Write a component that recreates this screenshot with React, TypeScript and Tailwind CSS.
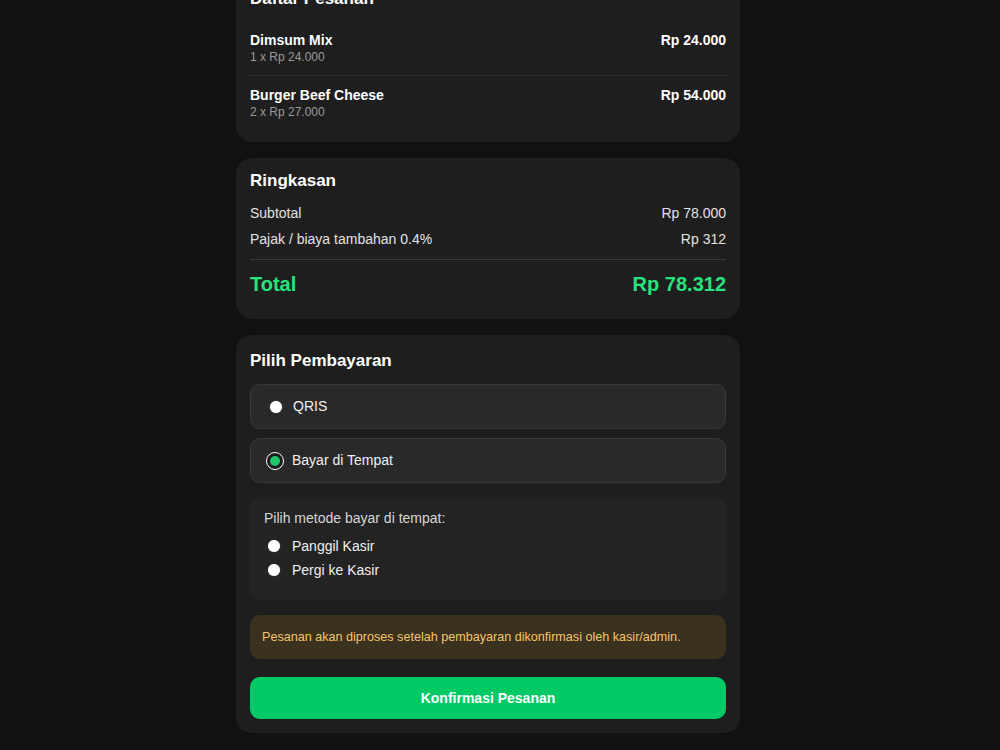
import React from "react";

const Radio = ({ checked = false }: { checked?: boolean }) =>
  checked ? (
    <span className="flex h-[18px] w-[18px] shrink-0 items-center justify-center rounded-full border-[1.5px] border-white bg-[#1c1c1c]">
      <span className="h-[10px] w-[10px] rounded-full bg-[#1fc56a]" />
    </span>
  ) : (
    <span className="h-[12px] w-[12px] shrink-0 rounded-full bg-white shadow-[0_0_1px_rgba(255,255,255,0.6)]" />
  );

export default function App() {
  return (
    <div
      className="min-h-[750px] w-full overflow-hidden bg-[#111111] pr-[24px] text-white"
      style={{ fontFamily: '"Liberation Sans", Arial, sans-serif' }}
    >
      <div className="mx-auto -mt-[24px] flex w-[504px] flex-col gap-[16px] pb-[20px]">
        {/* Daftar Pesanan */}
        <div className="rounded-[16px] bg-[#1e1e1e] px-[14px] pt-[12px] pb-[22px]">
          <h2 className="text-[17px] font-bold leading-[22px]">Daftar Pesanan</h2>
          <div className="mt-[21px]">
            <div className="flex justify-between border-b border-[#2e2e2e] pb-[10px]">
              <div>
                <div className="text-[14px] font-bold leading-[18px]">Dimsum Mix</div>
                <div className="text-[12px] leading-[16px] text-[#9a9a9a]">1 x Rp 24.000</div>
              </div>
              <div className="text-[14px] font-bold leading-[18px]">Rp 24.000</div>
            </div>
            <div className="flex justify-between pt-[10px]">
              <div>
                <div className="text-[14px] font-bold leading-[18px]">Burger Beef Cheese</div>
                <div className="text-[12px] leading-[16px] text-[#9a9a9a]">2 x Rp 27.000</div>
              </div>
              <div className="text-[14px] font-bold leading-[18px]">Rp 54.000</div>
            </div>
          </div>
        </div>

        {/* Ringkasan */}
        <div className="rounded-[16px] bg-[#1e1e1e] px-[14px] pt-[12px] pb-[21px]">
          <h2 className="text-[17px] font-bold leading-[22px]">Ringkasan</h2>
          <div className="mt-[11px] flex justify-between text-[14px] leading-[20px] text-[#e2e2e2]">
            <span>Subtotal</span>
            <span>Rp 78.000</span>
          </div>
          <div className="mt-[6px] flex justify-between text-[14px] leading-[20px] text-[#e2e2e2]">
            <span>Pajak / biaya tambahan 0.4%</span>
            <span>Rp 312</span>
          </div>
          <div className="mt-[10px] border-t border-[#3a3a3a]" />
          <div className="mt-[10px] flex justify-between text-[20px] font-bold leading-[28px] text-[#26e37d]">
            <span>Total</span>
            <span>Rp 78.312</span>
          </div>
        </div>

        {/* Pilih Pembayaran */}
        <div className="rounded-[16px] bg-[#1e1e1e] px-[14px] pt-[15px] pb-[14px]">
          <h2 className="text-[17px] font-bold leading-[22px]">Pilih Pembayaran</h2>
          <div className="mt-[12px] flex h-[45px] items-center gap-[11px] rounded-[10px] border border-[#383838] bg-[#292929] pl-[19px] text-[14px] text-[#f0f0f0]">
            <Radio />
            <span>QRIS</span>
          </div>
          <div className="mt-[9px] flex h-[45px] items-center gap-[8px] rounded-[10px] border border-[#383838] bg-[#292929] pl-[15px] text-[14px] text-[#f0f0f0]">
            <Radio checked />
            <span>Bayar di Tempat</span>
          </div>
          <div className="mt-[14px] rounded-[10px] bg-[#232323] px-[14px] pt-[12px] pb-[20px]">
            <div className="text-[14px] leading-[18px] text-[#d6d6d6]">Pilih metode bayar di tempat:</div>
            <div className="mt-[9px] flex items-center gap-[12px] pl-[4px] text-[14px] leading-[20px] text-[#f0f0f0]">
              <Radio />
              <span>Panggil Kasir</span>
            </div>
            <div className="mt-[4px] flex items-center gap-[12px] pl-[4px] text-[14px] leading-[20px] text-[#f0f0f0]">
              <Radio />
              <span>Pergi ke Kasir</span>
            </div>
          </div>
          <div className="mt-[15px] flex h-[44px] items-center rounded-[10px] bg-[#3b311f] px-[12px] text-[12.6px] text-[#f5c46a]">
            Pesanan akan diproses setelah pembayaran dikonfirmasi oleh kasir/admin.
          </div>
          <button className="mt-[18px] flex h-[42px] w-full items-center justify-center rounded-[10px] bg-[#00c965] text-[14px] font-bold text-white">
            Konfirmasi Pesanan
          </button>
        </div>
      </div>
    </div>
  );
}
